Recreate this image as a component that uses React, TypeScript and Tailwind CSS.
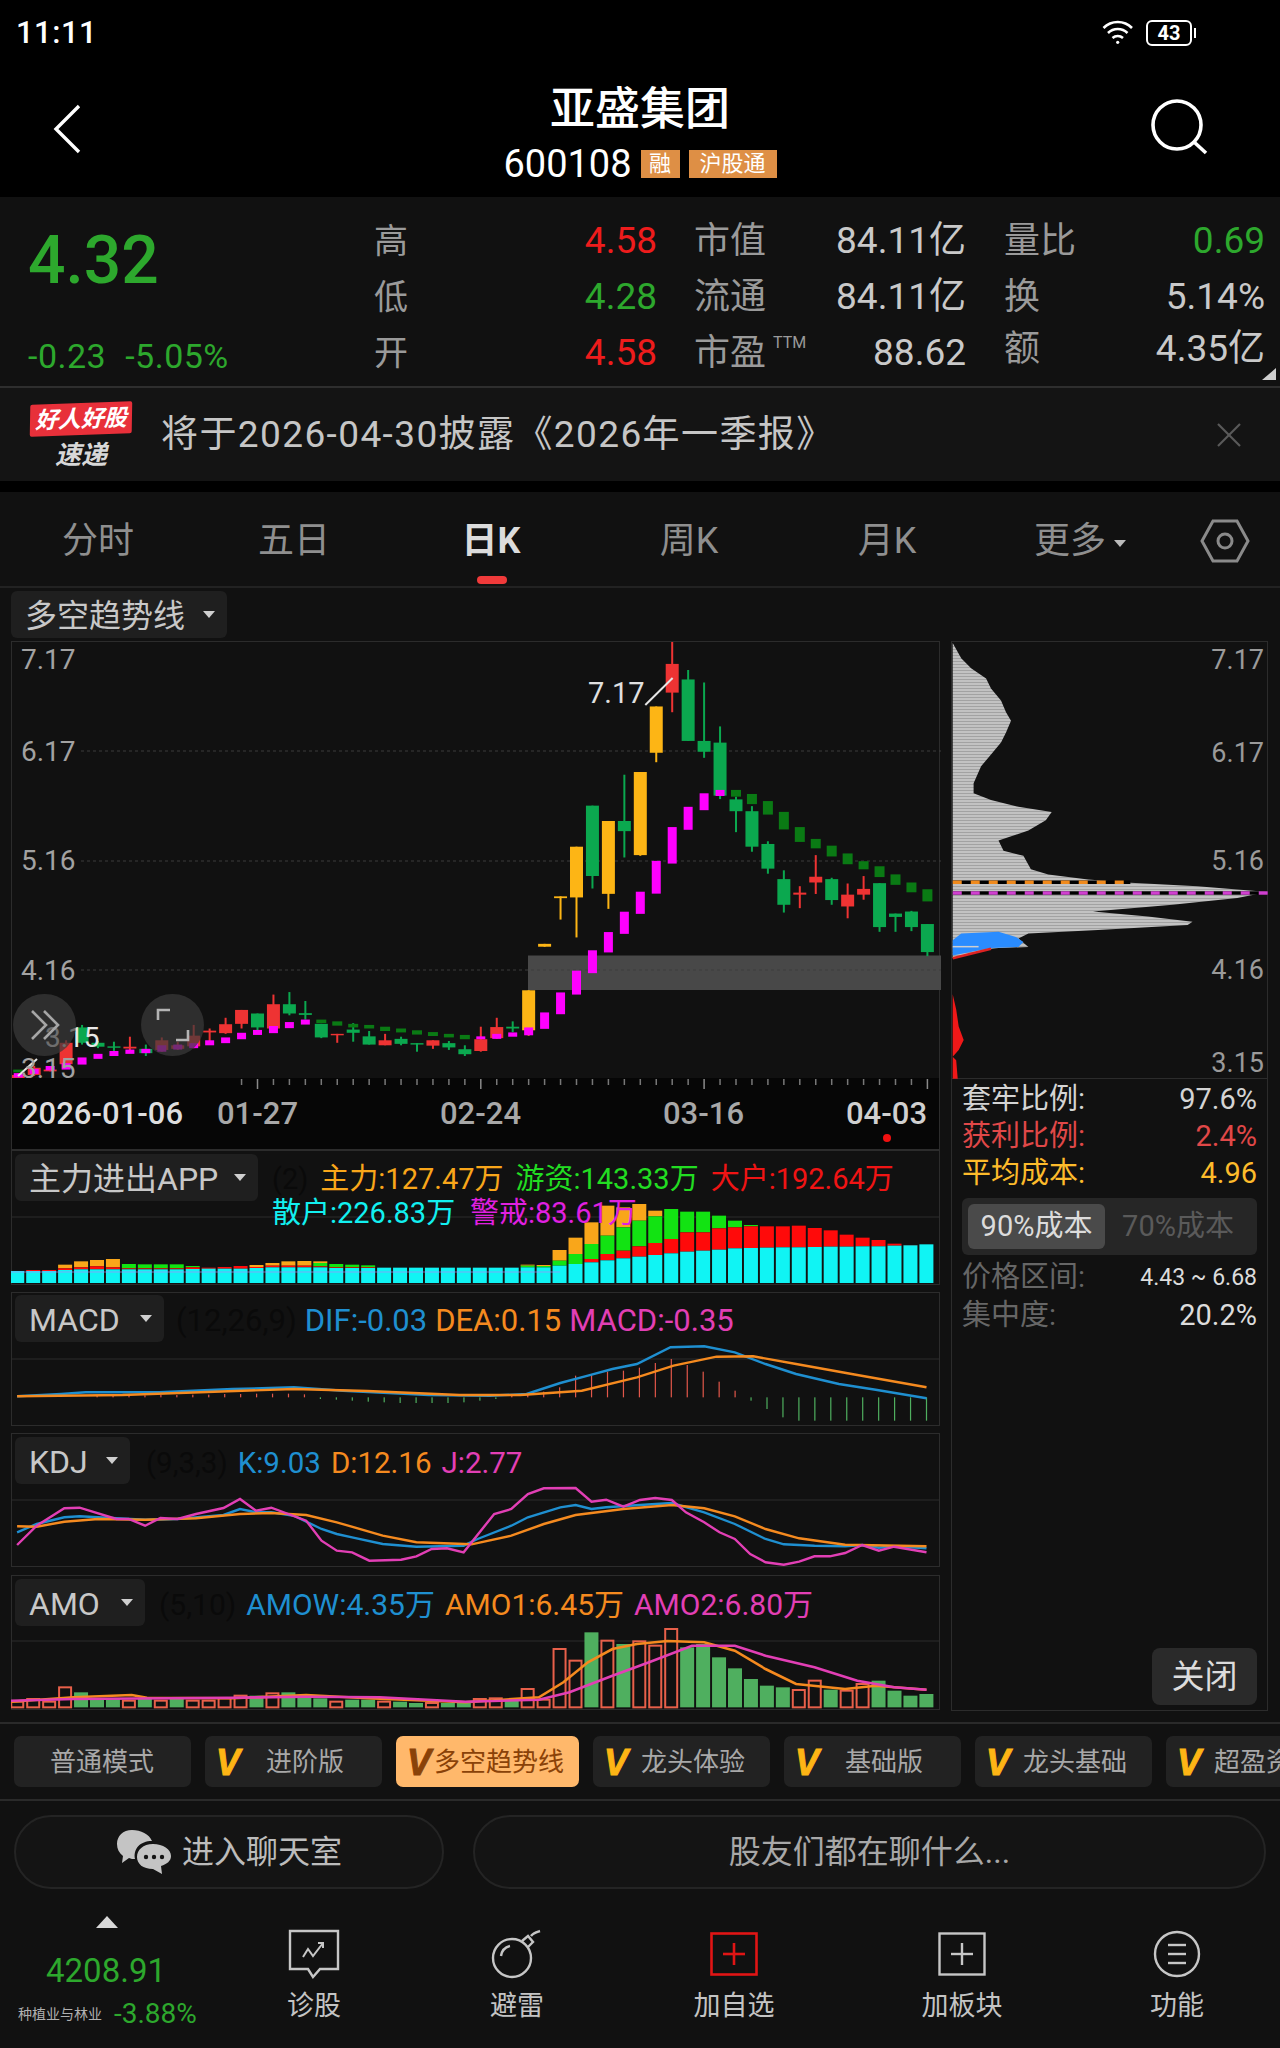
import React from "react";

const X = (i: number) => 17.25 + 15.95 * i;
const z2 = (Y: number) => 590 + Y / 2.8;
const z3 = (Y: number) => 620 + Y / 2.96;
const zx3 = (V: number) => 500 + V / 2.01;
const pts = (a: number[][], fx: (v: number) => number, fy: (v: number) => number) =>
  a.map(([p, q]) => `${fx(p).toFixed(1)},${fy(q).toFixed(1)}`).join(" ");

const G = "#0BA84F";
const R = "#EE3333";
const O = "#FDB515";
const DG = "#0A7A14";
const MG = "#FF00FF";

// i, colour, high, bodyTop, bodyBottom, low (zoom units)
const candlesA: [number, string, number, number, number, number][] = [
  [0, R, 1350, 1355, 1365, 1366], [1, R, 1330, 1335, 1355, 1358], [2, R, 1335, 1340, 1345, 1345], [3, R, 1258, 1265, 1325, 1330],
  [4, G, 1215, 1222, 1265, 1270], [5, G, 1260, 1265, 1276, 1280], [6, G, 1262, 1275, 1279, 1290], [7, R, 1248, 1276, 1281, 1290],
  [8, G, 1270, 1282, 1294, 1302], [9, R, 1250, 1258, 1285, 1290], [10, R, 1262, 1272, 1282, 1285], [11, R, 1215, 1245, 1275, 1280],
  [12, R, 1225, 1231, 1236, 1270], [13, R, 1195, 1213, 1238, 1240], [14, R, 1173, 1173, 1212, 1225], [15, G, 1183, 1183, 1222, 1240],
  [16, R, 1130, 1157, 1225, 1230], [17, G, 1123, 1157, 1183, 1188], [18, G, 1148, 1182, 1187, 1200], [19, G, 1212, 1212, 1250, 1252],
  [20, R, 1240, 1240, 1244, 1265], [21, G, 1210, 1228, 1237, 1262], [22, G, 1232, 1247, 1270, 1270], [23, R, 1240, 1258, 1272, 1272],
  [24, G, 1248, 1254, 1268, 1272], [25, G, 1266, 1266, 1270, 1290], [26, R, 1258, 1258, 1273, 1282], [27, G, 1260, 1266, 1278, 1285],
  [28, G, 1272, 1283, 1297, 1302], [29, R, 1220, 1255, 1288, 1290], [30, R, 1195, 1221, 1252, 1254], [31, G, 1205, 1220, 1225, 1235],
  [32, O, 1118, 1118, 1230, 1245], [33, O, 988, 988, 996, 996], [34, O, 855, 855, 860, 920], [35, O, 716, 716, 858, 970],
  [36, G, 601, 601, 798, 833], [37, O, 644, 644, 848, 890],
];
const candlesB: [number, string, number, number, number, number][] = [
  [38, G, 455, 592, 622, 700], [39, O, 447, 447, 693, 695], [40, O, 253, 253, 390, 418], [41, R, 60, 127, 212, 270],
  [42, G, 145, 173, 355, 355], [43, G, 182, 355, 387, 405], [44, G, 312, 360, 517, 527], [45, G, 520, 528, 563, 625],
  [46, G, 548, 563, 668, 683], [47, G, 652, 660, 733, 748], [48, G, 738, 764, 840, 863], [49, R, 785, 804, 810, 850],
  [50, R, 693, 757, 774, 808], [51, G, 760, 764, 826, 840], [52, R, 777, 810, 845, 880], [53, R, 755, 793, 810, 825],
  [54, G, 776, 776, 906, 920], [55, G, 866, 866, 876, 920], [56, G, 858, 860, 906, 918], [57, G, 897, 897, 980, 992],
];
const darkA = [[0, 1340, 1348], [19, 1200, 1210], [20, 1205, 1217], [21, 1212, 1222], [22, 1215, 1225], [23, 1220, 1232], [24, 1225, 1236], [25, 1230, 1242], [26, 1235, 1246], [27, 1240, 1250], [28, 1243, 1255]];
const darkB = [[45, 500, 520], [46, 512, 542], [47, 533, 573], [48, 565, 617], [49, 610, 654], [50, 645, 673], [51, 665, 697], [52, 688, 720], [53, 711, 735], [54, 726, 758], [55, 750, 781], [56, 774, 803], [57, 794, 830]];
const magA = [[0, 1350, 1362], [1, 1338, 1352], [2, 1330, 1342], [3, 1322, 1340], [4, 1306, 1326], [5, 1296, 1310], [6, 1288, 1302], [7, 1284, 1296], [8, 1282, 1294], [9, 1272, 1290], [10, 1270, 1284], [11, 1266, 1280], [12, 1258, 1272], [13, 1250, 1266], [14, 1237, 1255], [15, 1229, 1243], [16, 1218, 1238], [17, 1207, 1224], [18, 1200, 1214], [29, 1247, 1255], [30, 1240, 1254], [31, 1236, 1248], [32, 1222, 1244], [33, 1180, 1226], [34, 1124, 1185], [35, 1063, 1130], [36, 1006, 1070], [37, 955, 1012], [38, 898, 960], [39, 842, 904]];
const magB = [[40, 710, 807], [41, 610, 718], [42, 550, 618], [43, 510, 560], [44, 500, 518]];

const stack: number[][] = [
  [396, 396, 396, 396], [393, 393, 393, 396], [393, 393, 393, 396], [377, 388, 388, 393], [367, 385, 385, 391], [363, 382, 382, 391],
  [360, 385, 385, 391], [375, 375, 388, 391], [376, 376, 388, 391], [376, 376, 388, 391], [376, 376, 388, 391], [381, 381, 385, 390],
  [386, 386, 386, 389], [384, 384, 384, 389], [381, 381, 381, 389], [378, 384, 384, 387], [372, 380, 380, 385], [367, 380, 380, 385],
  [366, 380, 380, 385], [367, 372, 382, 385], [375, 375, 385, 387], [377, 377, 385, 387], [379, 379, 385, 387], [386, 386, 386, 386],
  [386, 386, 386, 386], [386, 386, 386, 386], [386, 386, 386, 386], [386, 386, 386, 386], [386, 386, 386, 386], [386, 386, 386, 386],
  [386, 386, 386, 386], [386, 386, 386, 386], [377, 380, 385, 385], [378, 381, 385, 385], [333, 365, 380, 380], [296, 345, 375, 375],
  [250, 315, 360, 370], [200, 290, 345, 364], [205, 265, 335, 358], [195, 245, 322, 353], [215, 232, 312, 348], [210, 210, 300, 343],
  [218, 218, 280, 338], [218, 218, 280, 335], [230, 230, 268, 332], [245, 245, 265, 328], [258, 258, 262, 327], [262, 262, 262, 326],
  [262, 262, 262, 325], [260, 260, 260, 325], [267, 267, 267, 324], [274, 274, 274, 323], [287, 287, 287, 323], [296, 296, 296, 322],
  [303, 303, 303, 322], [314, 314, 314, 320], [318, 318, 318, 319], [316, 316, 316, 316],
];

const macdSticks: [number, number][] = [
  [5, 770], [6, 770], [7, 769], [8, 769], [9, 768], [10, 768], [11, 767], [12, 767], [13, 765], [14, 765], [15, 764], [16, 764], [17, 764], [18, 766],
  [19, 780], [20, 782], [21, 785], [22, 788], [23, 790], [24, 792], [25, 792], [26, 792], [27, 792], [28, 790], [29, 785], [30, 780],
  [31, 770], [32, 768], [33, 758], [34, 745], [35, 710], [36, 708], [37, 698], [38, 695], [39, 686], [40, 672], [41, 660], [42, 678], [43, 698], [44, 728], [45, 755],
  [46, 785], [47, 810], [48, 835], [49, 845], [50, 845], [51, 845], [52, 845], [53, 845], [54, 845], [55, 845], [56, 845], [57, 845],
];

const amo: [number, number][] = [
  [818, 0], [810, 0], [818, 0], [775, 0], [790, 1], [808, 1], [808, 1], [815, 0], [808, 1], [815, 0], [805, 1], [815, 0], [815, 0], [808, 0], [800, 0],
  [800, 1], [793, 0], [790, 1], [800, 1], [808, 1], [818, 0], [812, 1], [812, 1], [818, 0], [818, 1], [822, 1], [822, 0], [822, 1], [822, 1], [810, 0],
  [808, 0], [815, 1], [780, 0], [812, 0], [660, 0], [695, 0], [610, 1], [635, 0], [645, 1], [637, 0], [650, 0], [600, 0], [655, 1], [645, 1], [685, 1],
  [718, 1], [750, 1], [770, 1], [775, 1], [783, 0], [755, 0], [782, 1], [785, 0], [765, 0], [755, 1], [785, 1], [800, 1], [795, 1],
];

const zx = (v: number) => v / 1.633;
const y4 = (v: number) => 1140 + v / 3;
const y5 = (v: number) => 1430 + v / 3;

const chipOutline = [[908, 65], [925, 110], [945, 140], [975, 170], [985, 200], [1005, 235], [1015, 270], [1025, 295], [1015, 330], [1005, 360], [985, 395], [965, 430], [950, 480], [950, 510], [985, 530], [1040, 550], [1107, 565], [1095, 590], [1060, 620], [1000, 650], [1010, 680], [1050, 695], [1065, 735], [1100, 750], [1180, 765], [1265, 775], [1400, 785], [1542, 802], [1480, 820], [1350, 840], [1190, 860], [1300, 875], [1390, 890], [1380, 900], [1200, 915], [1060, 925], [1040, 940], [1060, 965], [1000, 968], [985, 970], [908, 998]];
const chipBlue = [[908, 945], [925, 925], [1000, 920], [1035, 935], [1050, 950], [1040, 965], [985, 968], [908, 990]];
const chipRed = [[908, 1105], [915, 1150], [920, 1200], [930, 1240], [920, 1270], [908, 1290], [915, 1300], [918, 1355], [908, 1355]];

function Caret({ className }: { className: string }) {
  return <span className={`inline-block h-0 w-0 border-x-[6px] border-t-[7px] border-x-transparent ${className}`} />;
}

function Select({ label, className }: { label: string; className: string }) {
  return (
    <div className={`flex h-[47px] shrink-0 items-center justify-between rounded-[6px] bg-[#1f1f1f] pl-[14px] pr-[12px] text-[32px] text-[#c8c8c8] ${className}`}>
      <span className="pt-[3px]">{label}</span>
      <Caret className="border-t-[#cfcfcf]" />
    </div>
  );
}

function MainChart() {
  const cs = [
    ...candlesA.map((c) => ({ i: c[0], col: c[1], h: z2(c[2]), t: z2(c[3]), b: z2(c[4]), l: z2(c[5]) })),
    ...candlesB.map((c) => ({ i: c[0], col: c[1], h: z3(c[2]), t: z3(c[3]), b: z3(c[4]), l: z3(c[5]) })),
  ];
  return (
    <svg viewBox="11 641 929 438" className="absolute left-0 top-0 h-[438px] w-[929px]">
      <rect x={527} y={954.5} width={413} height={34.5} fill="#484848" />
      {[750, 860, 969].map((y) => (
        <line key={y} x1={80} x2={940} y1={y} y2={y} stroke="#3d3d3d" strokeWidth={1} strokeDasharray="3 3" />
      ))}
      {cs.map((c) => (
        <g key={c.i} fill={c.col}>
          <rect x={X(c.i) - 1} y={c.h} width={2} height={c.l - c.h} />
          <rect x={X(c.i) - 6.5} y={c.t} width={13} height={c.b - c.t} />
        </g>
      ))}
      {darkA.map((d) => <rect key={d[0]} x={X(d[0]) - 5} y={z2(d[1])} width={10} height={(d[2] - d[1]) / 2.8} fill={DG} />)}
      {darkB.map((d) => <rect key={d[0]} x={X(d[0]) - 5} y={z3(d[1])} width={10} height={(d[2] - d[1]) / 2.96} fill={DG} />)}
      {magA.map((d) => <rect key={d[0]} x={X(d[0]) - 4.5} y={z2(d[1])} width={9} height={(d[2] - d[1]) / 2.8} fill={MG} />)}
      {magB.map((d) => <rect key={d[0]} x={X(d[0]) - 4.5} y={z3(d[1])} width={9} height={(d[2] - d[1]) / 2.96} fill={MG} />)}
      <line x1={671.6} y1={677} x2={644.3} y2={704} stroke="#e6e6e6" strokeWidth={2} />
      <line x1={17} y1={1075} x2={36} y2={1058} stroke="#e6e6e6" strokeWidth={2} />
    </svg>
  );
}

function Ticks() {
  return (
    <svg viewBox="11 1079 929 12" className="absolute left-0 top-0 h-[12px] w-[929px]">
      {Array.from({ length: 44 }, (_, k) => k + 14).map((i) => {
        const major = i === 15 || i === 29 || i === 43 || i === 57;
        return <rect key={i} x={X(i) - 0.75} y={1080} width={1.5} height={major ? 10 : 6} fill={major ? "#8a8a8a" : "#777"} />;
      })}
    </svg>
  );
}

function ChipChart() {
  return (
    <svg viewBox="951 641 316 438" className="absolute left-0 top-0 h-[438px] w-[316px]">
      <defs>
        <pattern id="chipstripe" width="8" height="3" patternUnits="userSpaceOnUse">
          <rect width="8" height="3" fill="#c2c2c2" />
          <rect width="8" height="1" fill="#a2a2a2" />
        </pattern>
      </defs>
      <polygon points={pts(chipOutline, zx3, z3)} fill="url(#chipstripe)" />
      <polygon points={pts(chipBlue, zx3, z3)} fill="#2A8CFF" />
      <line x1={zx3(908)} x2={zx3(960)} y1={z3(964)} y2={z3(964)} stroke="#cfcfcf" strokeWidth={1.5} />
      <line x1={zx3(908)} x2={zx3(985)} y1={z3(998)} y2={z3(970)} stroke="#d22" strokeWidth={2.5} />
      <polygon points={pts(chipRed, zx3, z3)} fill="#F01818" />
      <line x1={zx3(908)} x2={zx3(1265)} y1={z3(773)} y2={z3(773)} stroke="#000" strokeWidth={3.5} />
      <line x1={zx3(908)} x2={zx3(1265)} y1={z3(773)} y2={z3(773)} stroke="#F08A1C" strokeWidth={3.5} strokeDasharray="9 9" />
      <line x1={zx3(908)} x2={zx3(1542)} y1={z3(805)} y2={z3(805)} stroke="#000" strokeWidth={3.5} />
      <line x1={zx3(908)} x2={zx3(1542)} y1={z3(805)} y2={z3(805)} stroke="#D040D0" strokeWidth={3.5} strokeDasharray="9 9" />
    </svg>
  );
}

function FlowPanel() {
  return (
    <svg viewBox="11 1151 929 135" className="absolute -left-px -top-px h-[135px] w-[929px]">
      <line x1={11} x2={940} y1={1218} y2={1218} stroke="#2c2c2c" />
      {stack.map((s, i) => {
        const x = X(i) - 7;
        const [o, g, r, c] = s.map(y4);
        const b = y4(432);
        return (
          <g key={i}>
            <rect x={x} y={o} width={14} height={g - o} fill="#F9A61A" />
            <rect x={x} y={g} width={14} height={r - g} fill="#12E312" />
            <rect x={x} y={r} width={14} height={c - r} fill="#FF0A0A" />
            <rect x={x} y={c} width={14} height={b - c} fill="#10F4F4" />
          </g>
        );
      })}
      <line x1={11} x2={560} y1={1273} y2={1273} stroke="#A78BFA" strokeWidth={1} opacity={0.7} />
    </svg>
  );
}

function MacdPanel() {
  const blue = [[28, 772], [100, 765], [140, 760], [260, 760], [380, 750], [480, 745], [560, 755], [700, 768], [800, 770], [860, 765], [915, 732], [960, 710], [1000, 690], [1040, 675], [1095, 625], [1150, 622], [1200, 640], [1250, 675], [1300, 705], [1370, 735], [1430, 752], [1513, 778]];
  const orange = [[28, 772], [200, 768], [350, 758], [480, 750], [600, 756], [750, 768], [850, 768], [950, 755], [1040, 715], [1100, 680], [1170, 653], [1230, 652], [1300, 675], [1400, 708], [1513, 745]];
  return (
    <svg viewBox="11 1293 929 134" className="absolute -left-px -top-px h-[134px] w-[929px]">
      <line x1={11} x2={940} y1={1360} y2={1360} stroke="#2c2c2c" />
      {macdSticks.map(([i, t]) => {
        const up = t < 775;
        return <rect key={i} x={X(i) - 0.5} y={y4(up ? t : 775)} width={1.2} height={Math.abs(t - 775) / 3} fill={up ? "#E2574A" : "#4FAF5F"} />;
      })}
      <polyline points={pts(blue, zx, y4)} fill="none" stroke="#1F8FD0" strokeWidth={2.4} />
      <polyline points={pts(orange, zx, y4)} fill="none" stroke="#F58A1F" strokeWidth={2.4} />
    </svg>
  );
}

function KdjPanel() {
  const j = [[28, 348], [60, 290], [105, 238], [130, 236], [190, 270], [210, 270], [237, 290], [262, 267], [290, 270], [320, 255], [365, 237], [392, 210], [418, 245], [443, 236], [500, 275], [525, 335], [550, 365], [575, 370], [603, 395], [655, 392], [680, 382], [705, 360], [730, 358], [757, 370], [807, 255], [835, 240], [862, 195], [888, 178], [940, 177], [966, 218], [990, 212], [1018, 233], [1045, 213], [1070, 207], [1097, 213], [1120, 250], [1150, 280], [1175, 310], [1200, 330], [1225, 375], [1250, 400], [1280, 407], [1305, 398], [1330, 382], [1355, 382], [1380, 372], [1408, 348], [1435, 365], [1460, 353], [1513, 370]];
  const k = [[28, 310], [60, 285], [105, 265], [130, 262], [190, 268], [237, 272], [290, 270], [365, 258], [392, 240], [418, 250], [443, 250], [480, 260], [525, 300], [550, 315], [575, 325], [625, 345], [680, 353], [757, 350], [780, 330], [835, 290], [862, 265], [915, 235], [940, 228], [966, 240], [990, 235], [1045, 228], [1097, 222], [1150, 250], [1200, 285], [1250, 330], [1280, 346], [1330, 350], [1380, 352], [1408, 348], [1435, 356], [1460, 352], [1513, 358]];
  const d = [[28, 292], [60, 293], [105, 278], [160, 270], [237, 272], [320, 268], [392, 255], [443, 252], [500, 258], [550, 280], [625, 320], [680, 340], [770, 346], [835, 320], [888, 285], [940, 258], [1018, 240], [1097, 228], [1150, 238], [1200, 262], [1250, 300], [1305, 328], [1380, 347], [1513, 352]];
  return (
    <svg viewBox="11 1434 929 134" className="absolute -left-px -top-px h-[134px] w-[929px]">
      <line x1={11} x2={940} y1={1501} y2={1501} stroke="#2c2c2c" />
      <polyline points={pts(k, zx, y5)} fill="none" stroke="#1F8FD0" strokeWidth={2.4} />
      <polyline points={pts(d, zx, y5)} fill="none" stroke="#F58A1F" strokeWidth={2.4} />
      <polyline points={pts(j, zx, y5)} fill="none" stroke="#E23FB5" strokeWidth={2.4} />
    </svg>
  );
}

function AmoPanel() {
  const o = [[18, 818], [120, 805], [215, 798], [240, 806], [380, 808], [500, 798], [600, 808], [760, 820], [880, 805], [920, 760], [960, 700], [1000, 660], [1040, 645], [1090, 636], [1150, 640], [1200, 665], [1250, 720], [1300, 765], [1380, 780], [1430, 770], [1513, 782]];
  const p = [[18, 815], [120, 810], [380, 806], [500, 803], [620, 805], [760, 818], [880, 812], [930, 790], [1000, 740], [1060, 700], [1130, 650], [1200, 650], [1250, 680], [1330, 715], [1400, 755], [1460, 775], [1513, 782]];
  return (
    <svg viewBox="11 1576 929 135" className="absolute -left-px -top-px h-[135px] w-[929px]">
      <line x1={11} x2={940} y1={1642} y2={1642} stroke="#2c2c2c" />
      {amo.map(([t, g], i) =>
        g ? (
          <rect key={i} x={X(i) - 7} y={y5(t)} width={14} height={(835 - t) / 3} fill="#4FAF5F" />
        ) : (
          <rect key={i} x={X(i) - 6} y={y5(t)} width={12} height={(835 - t) / 3} fill="none" stroke="#E8604A" strokeWidth={2} />
        )
      )}
      <polyline points={pts(o, zx, y5)} fill="none" stroke="#F58A1F" strokeWidth={2.6} />
      <polyline points={pts(p, zx, y5)} fill="none" stroke="#E23FB5" strokeWidth={2.6} />
    </svg>
  );
}

function Row({ label, value, color = "text-[#c9c9c9]", labelClass = "text-[36px]", valueClass = "" }: { label: React.ReactNode; value: string; color?: string; labelClass?: string; valueClass?: string }) {
  return (
    <div className="flex h-[56px] items-center justify-between">
      <span className={`text-[#9a9a9a] ${labelClass}`}>{label}</span>
      <span className={`text-[37px] ${color} ${valueClass}`}>{value}</span>
    </div>
  );
}

function Chip({ text, active, v = true, className = "" }: { text: string; active?: boolean; v?: boolean; className?: string }) {
  return (
    <div
      className={`flex h-[51px] shrink-0 items-center rounded-[7px] pl-[11px] pt-[3px] text-[26px] ${className} ${active ? "bg-[#FFB86B] text-[#8A4208]" : "bg-[#222222] text-[#a8a8a8]"}`}
    >
      {v && <span className={`font-['Liberation_Sans',sans-serif] text-[36px] font-bold italic leading-none [-webkit-text-stroke:1px_currentColor] ${active ? "text-[#8A4208]" : "text-[#FDB515]"}`}>V</span>}
      <span className="flex-1 pr-[12px] text-center">{text}</span>
    </div>
  );
}

function NavItem({ label, icon, className }: { label: string; icon: React.ReactNode; className: string }) {
  return (
    <div className={`flex flex-col items-center pt-[41px] ${className}`}>
      <div className="flex h-[48px] items-center justify-center">{icon}</div>
      <span className="mt-[11px] text-[27px] leading-[34px] text-[#c4c4c4]">{label}</span>
    </div>
  );
}

export default function App() {
  return (
    <div className="flex h-[2048px] w-[1280px] flex-col overflow-hidden bg-[#111111] font-['Roboto','Noto_Sans_CJK_SC',sans-serif]">
      {/* status bar */}
      <div className="flex h-[65px] shrink-0 items-center bg-black pl-[16px] pr-[88px] text-white">
        <span className="pt-[2px] text-[31px] font-medium tracking-[0.5px]">11:11</span>
        <div className="ml-auto flex items-center gap-[12px]">
          <svg width="32" height="25" viewBox="0 0 32 25" fill="none" stroke="#fff" strokeWidth="2.6">
            <path d="M1.5 8 A 20 20 0 0 1 30 8" />
            <path d="M6 13 A 14 14 0 0 1 25.5 13" />
            <path d="M10.5 18 A 8 8 0 0 1 21 18" />
            <circle cx="15.7" cy="22.3" r="1.6" fill="#fff" stroke="none" />
          </svg>
          <div className="relative flex h-[26px] w-[46px] items-center justify-center rounded-[6px] border-2 border-white text-[20px] font-bold leading-none">
            43
            <span className="absolute -right-[6px] top-[6px] h-[10px] w-[2px] bg-white" />
          </div>
        </div>
      </div>

      {/* header */}
      <div className="relative flex h-[132px] shrink-0 flex-col items-center bg-black text-white">
        <svg width="28" height="50" viewBox="0 0 28 50" fill="none" stroke="#fff" strokeWidth="3.4" className="absolute left-[53px] top-[39px]">
          <polyline points="26,2 3,25 26,48" />
        </svg>
        <svg width="58" height="58" viewBox="0 0 58 58" fill="none" stroke="#fff" strokeWidth="3.6" className="absolute left-[1151px] top-[34px]">
          <circle cx="26" cy="26" r="24" />
          <line x1="43" y1="43" x2="55" y2="54" />
        </svg>
        <div className="mt-[21px] text-[45px] font-medium leading-[48px]">亚盛集团</div>
        <div className="mt-[14px] flex items-center gap-[9px]">
          <span className="text-[38px] leading-[32px]">600108</span>
          <span className="flex h-[28px] w-[39px] items-center justify-center bg-[#DE8F45] text-[22px] leading-none">融</span>
          <span className="flex h-[28px] w-[88px] items-center justify-center bg-[#DE8F45] text-[22px] leading-none">沪股通</span>
        </div>
      </div>

      {/* quote */}
      <div className="relative flex h-[191px] shrink-0 items-start border-b-2 border-[#2e2e2e] pt-[16px]">
        <div className="flex w-[374px] flex-col pl-[28px] text-[#2DA82D]">
          <div className="mt-[8px] text-[66px] font-medium leading-[80px]">4.32</div>
          <div className="mt-[37px] flex gap-[19px] text-[34px] leading-[36px] tracking-[0.5px]">
            <span>-0.23</span>
            <span>-5.05%</span>
          </div>
        </div>
        <div className="w-[283px]">
          <Row label="高" value="4.58" color="text-[#EE1C1C]" labelClass="text-[34px]" />
          <Row label="低" value="4.28" color="text-[#2DA82D]" labelClass="text-[34px]" />
          <Row label="开" value="4.58" color="text-[#EE1C1C]" labelClass="text-[34px]" />
        </div>
        <div className="ml-[37px] w-[272px]">
          <Row label="市值" value="84.11亿" />
          <Row label="流通" value="84.11亿" />
          <Row
            label={
              <>
                市盈
                <span className="relative -top-[17px] ml-[7px] text-[16px]">TTM</span>
              </>
            }
            value="88.62"
          />
        </div>
        <div className="ml-[38px] w-[261px]">
          <Row label="量比" value="0.69" color="text-[#2DA82D]" />
          <Row label="换" value="5.14%" />
          <Row label="额" value="4.35亿" labelClass="text-[36px] -translate-y-[4px] inline-block" valueClass="-translate-y-[4px] inline-block" />
        </div>
        <svg width="14" height="12" viewBox="0 0 14 12" className="absolute left-[1262px] top-[171px]">
          <polygon points="14,0 14,12 0,12" fill="#cfcfcf" />
        </svg>
      </div>

      {/* banner */}
      <div className="flex h-[93px] shrink-0 items-center bg-[#141414] pl-[30px] pr-[38px]">
        <div className="relative mt-[6px] flex h-[70px] w-[102px] shrink-0 flex-col items-center">
          <div className="flex h-[32px] w-[102px] -rotate-2 -skew-x-3 items-center justify-center rounded-[2px] bg-[#E8303A] text-[23px] font-bold italic leading-none text-white">好人好股</div>
          <div className="mt-[6px] text-[26px] font-bold italic leading-[28px] text-[#d8d8d8]">速递</div>
        </div>
        <div className="ml-[29px] text-[37px] tracking-[1.4px] text-[#c6c6c6]">将于2026-04-30披露《2026年一季报》</div>
        <svg width="26" height="26" viewBox="0 0 26 26" stroke="#5a5a5a" strokeWidth="2.2" className="ml-auto">
          <line x1="2" y1="2" x2="24" y2="24" />
          <line x1="24" y1="2" x2="2" y2="24" />
        </svg>
      </div>

      <div className="h-[11px] shrink-0 bg-black" />

      {/* tabs */}
      <div className="flex h-[96px] shrink-0 items-center border-b-2 border-[#222] pt-[4px] text-[36px] text-[#8f8f8f]">
        <span className="w-[196px] text-center">分时</span>
        <span className="w-[196px] text-center">五日</span>
        <span className="relative w-[198px] text-center font-bold text-[#dcdcdc]">
          日K
          <span className="absolute left-[85px] top-[62px] h-[8px] w-[30px] rounded-full bg-[#F03A3A]" />
        </span>
        <span className="w-[198px] text-center">周K</span>
        <span className="w-[198px] text-center">月K</span>
        <span className="flex w-[188px] items-center justify-center gap-[8px]">
          更多
          <Caret className="mt-[4px] border-x-[5px] border-t-[#bbb]" />
        </span>
        <svg width="50" height="46" viewBox="0 0 50 46" fill="none" stroke="#8a8a8a" strokeWidth="3" className="ml-[26px]">
          <polygon points="13,3 37,3 48,23 37,43 13,43 2,23" />
          <circle cx="25" cy="23" r="7" />
        </svg>
      </div>

      {/* chart area */}
      <div className="flex shrink-0 pl-[11px]">
        <div className="flex w-[929px] flex-col">
          <Select label="多空趋势线" className="mt-[3px] w-[216px]" />
          <div className="relative mt-[3px] box-border h-[509px] border border-[#2c2c2c]">
            <MainChart />
            <span className="absolute left-[9px] top-[1px] text-[28px] leading-[34px] text-[#a2a2a2]">7.17</span>
            <span className="absolute left-[9px] top-[93px] text-[28px] leading-[34px] text-[#a2a2a2]">6.17</span>
            <span className="absolute left-[9px] top-[202px] text-[28px] leading-[34px] text-[#a2a2a2]">5.16</span>
            <span className="absolute left-[9px] top-[312px] text-[28px] leading-[34px] text-[#a2a2a2]">4.16</span>
            <span className="absolute left-[9px] top-[410px] text-[28px] leading-[34px] text-[#a2a2a2]">3.15</span>
            <span className="absolute left-[576px] top-[34px] text-[29px] leading-[34px] text-[#e0e0e0]">7.17</span>
            <span className="absolute left-[33px] top-[379px] text-[28px] leading-[34px] text-[#e8e8e8]">3.15</span>
            <button className="absolute left-[1px] top-[352px] flex h-[62px] w-[63px] items-center justify-center rounded-full bg-[#3a3a3a]/70">
              <svg width="34" height="32" viewBox="0 0 34 32" fill="none" stroke="#a6a6a6" strokeWidth="2.6">
                <polyline points="4,2 18,16 4,30" />
                <polyline points="16,2 30,16 16,30" />
              </svg>
            </button>
            <button className="absolute left-[129px] top-[352px] flex h-[62px] w-[63px] items-center justify-center rounded-full bg-[#3a3a3a]/70">
              <svg width="34" height="34" viewBox="0 0 34 34" fill="none" stroke="#b4b4b4" strokeWidth="2.6">
                <polyline points="2,12 2,2 14,2" />
                <polyline points="32,22 32,32 20,32" />
              </svg>
            </button>
            <div className="absolute bottom-0 left-0 right-0 h-[71px] bg-[#060606]">
              <Ticks />
              <div className="flex pl-[9px] pt-[17px] text-[31px] font-medium leading-[38px] text-[#a8a8a8]">
                <span className="w-[196px] text-[#dedede]">2026-01-06</span>
                <span className="w-[223px]">01-27</span>
                <span className="w-[223px]">02-24</span>
                <span className="w-[183px]">03-16</span>
                <span className="text-[#d0d0d0]">04-03</span>
              </div>
              <span className="absolute left-[871px] top-[56px] h-[8px] w-[8px] rounded-full bg-[#F01010]" />
            </div>
          </div>

          <div className="relative h-[135px] border border-[#2c2c2c] pl-[3px] pt-[3px]">
            <FlowPanel />
            <div className="relative flex items-start">
              <Select label="主力进出APP" className="w-[243px]" />
              <div className="ml-[14px] mt-[8px] flex w-[650px] flex-wrap gap-x-[12px] text-[29px] leading-[34px]">
                <span className="text-[#0a0a0a]">(2)</span>
                <span className="text-[#F9A61A]">主力:127.47万</span>
                <span className="text-[#22DD22]">游资:143.33万</span>
                <span className="text-[#F01414]">大户:192.64万</span>
                <span className="w-[186px] text-[#12F0F0]">散户:226.83万</span>
                <span className="text-[#E020E0]">警戒:83.61万</span>
              </div>
            </div>
          </div>

          <div className="relative mt-[7px] h-[134px] border border-[#2c2c2c] pl-[3px] pt-[2px]">
            <MacdPanel />
            <div className="relative flex items-start">
              <Select label="MACD" className="w-[149px]" />
              <div className="ml-[12px] mt-[9px] flex gap-x-[8px] text-[31px] leading-[34px]">
                <span className="text-[#0a0a0a]">(12,26,9)</span>
                <span className="text-[#1F8FD0]">DIF:-0.03</span>
                <span className="text-[#F58A1F]">DEA:0.15</span>
                <span className="text-[#E23FB5]">MACD:-0.35</span>
              </div>
            </div>
          </div>

          <div className="relative mt-[7px] h-[134px] border border-[#2c2c2c] pl-[3px] pt-[3px]">
            <KdjPanel />
            <div className="relative flex items-start">
              <Select label="KDJ" className="w-[115px]" />
              <div className="ml-[16px] mt-[9px] flex gap-x-[10px] text-[29.5px] leading-[34px]">
                <span className="text-[#0a0a0a]">(9,3,3)</span>
                <span className="text-[#1F8FD0]">K:9.03</span>
                <span className="text-[#F58A1F]">D:12.16</span>
                <span className="text-[#E23FB5]">J:2.77</span>
              </div>
            </div>
          </div>

          <div className="relative mt-[8px] h-[135px] border border-[#2c2c2c] pl-[3px] pt-[3px]">
            <AmoPanel />
            <div className="relative flex items-start">
              <Select label="AMO" className="w-[130px]" />
              <div className="ml-[14px] mt-[9px] flex gap-x-[10px] text-[30px] leading-[34px]">
                <span className="text-[#0a0a0a]">(5,10)</span>
                <span className="text-[#1F8FD0]">AMOW:4.35万</span>
                <span className="text-[#F58A1F]">AMO1:6.45万</span>
                <span className="text-[#E23FB5]">AMO2:6.80万</span>
              </div>
            </div>
          </div>
        </div>

        {/* right column */}
        <div className="ml-[11px] mt-[53px] flex h-[1070px] w-[317px] flex-col border border-[#2c2c2c]">
          <div className="relative h-[437px] shrink-0 border-b border-[#2c2c2c]">
            <ChipChart />
            <span className="absolute right-[3px] top-[1px] text-[27px] leading-[34px] text-[#9a9a9a]">7.17</span>
            <span className="absolute right-[3px] top-[94px] text-[27px] leading-[34px] text-[#9a9a9a]">6.17</span>
            <span className="absolute right-[3px] top-[202px] text-[27px] leading-[34px] text-[#9a9a9a]">5.16</span>
            <span className="absolute right-[3px] top-[311px] text-[27px] leading-[34px] text-[#9a9a9a]">4.16</span>
            <span className="absolute right-[3px] top-[404px] text-[27px] leading-[34px] text-[#9a9a9a]">3.15</span>
          </div>
          <div className="flex flex-1 flex-col px-[10px] pb-[5px] pt-[2px]">
            <div className="flex h-[37px] items-center justify-between text-[29px] text-[#d4d4d4]">
              <span>套牢比例:</span>
              <span>97.6%</span>
            </div>
            <div className="flex h-[37px] items-center justify-between text-[29px] text-[#E04848]">
              <span>获利比例:</span>
              <span>2.4%</span>
            </div>
            <div className="flex h-[37px] items-center justify-between text-[29px] text-[#FDBB2B]">
              <span>平均成本:</span>
              <span>4.96</span>
            </div>
            <div className="mt-[6px] flex h-[57px] items-center rounded-[6px] bg-[#262626] px-[6px] text-[29px]">
              <span className="flex h-[45px] w-[137px] items-center justify-center rounded-[6px] bg-[#4a4a4a] text-[#dcdcdc]">90%成本</span>
              <span className="flex-1 text-center text-[#5a5a5a]">70%成本</span>
            </div>
            <div className="mt-[4px] flex h-[38px] items-center justify-between">
              <span className="text-[29px] text-[#666]">价格区间:</span>
              <span className="text-[23px] text-[#dcdcdc]">4.43 ~ 6.68</span>
            </div>
            <div className="flex h-[38px] items-center justify-between">
              <span className="text-[29px] text-[#666]">集中度:</span>
              <span className="text-[29px] text-[#dcdcdc]">20.2%</span>
            </div>
            <div className="mt-auto flex h-[57px] w-[105px] items-center justify-center self-end rounded-[8px] bg-[#2a2a2a] text-[33px] text-[#dcdcdc]">关闭</div>
          </div>
        </div>
      </div>

      {/* mode strip */}
      <div className="mt-[11px] flex h-[79px] shrink-0 items-center gap-[14px] overflow-hidden border-y-2 border-[#2a2a2a] pb-[1px] pl-[14px]">
        <Chip text="普通模式" v={false} className="w-[177px]" />
        <Chip text="进阶版" className="w-[177px]" />
        <Chip text="多空趋势线" active className="w-[183px]" />
        <Chip text="龙头体验" className="w-[177px]" />
        <Chip text="基础版" className="w-[177px]" />
        <Chip text="龙头基础" className="w-[177px]" />
        <Chip text="超盈资金" className="w-[177px]" />
      </div>

      {/* chat */}
      <div className="mt-[14px] flex h-[74px] shrink-0 gap-[29px] px-[14px] text-[32px]">
        <div className="flex w-[430px] items-center justify-center gap-[10px] rounded-[37px] border-2 border-[#242424] bg-[#141414] text-[#bcbcbc]">
          <svg width="56" height="46" viewBox="0 0 56 46" fill="#c4c4c4">
            <path d="M16 1 C7 1 1 7 1 15 C1 20 3 24 7 27 L6 34 L13 29 C15 30 17 30 19 30 C17 20 24 12 36 12 C33 5 25 1 16 1Z" />
            <path d="M37 15 C27 15 21 21 21 28 C21 35 27 40 37 40 L46 45 L45 37 C51 35 55 32 55 27 C55 20 47 15 37 15Z" />
            <circle cx="30" cy="28" r="2.2" fill="#141414" />
            <circle cx="38" cy="28" r="2.2" fill="#141414" />
            <circle cx="46" cy="28" r="2.2" fill="#141414" />
          </svg>
          进入聊天室
        </div>
        <div className="flex flex-1 items-center justify-center rounded-[37px] border-2 border-[#242424] bg-[#141414] text-[#a8a8a8]">股友们都在聊什么...</div>
      </div>

      {/* bottom nav */}
      <div className="flex flex-1">
        <div className="relative w-[220px] pl-[18px] pt-[27px]">
          <svg width="22" height="12" viewBox="0 0 22 12" className="ml-[78px]">
            <polygon points="11,0 22,12 0,12" fill="#d8d8d8" />
          </svg>
          <div className="ml-[28px] mt-[23px] text-[33px] leading-[40px] text-[#2DA82D]">4208.91</div>
          <div className="mt-[8px] flex items-center gap-[12px]">
            <span className="text-[14px] leading-[30px] text-[#b0b0b0]">种植业与林业</span>
            <span className="text-[28px] leading-[30px] text-[#2DA82D]">-3.88%</span>
          </div>
        </div>
        <NavItem
          label="诊股"
          className="w-[188px]"
          icon={
            <svg width="52" height="50" viewBox="0 0 52 50" fill="none" stroke="#c6c6c6" strokeWidth="2.4">
              <path d="M2 2 H50 V40 H32 L25 48 L20 40 H2 Z" />
              <polyline points="15,28 20,20 25,27 35,14" strokeWidth="2" />
              <polyline points="30,14 35,14 35,19" strokeWidth="2" />
            </svg>
          }
        />
        <NavItem
          label="避雷"
          className="w-[218px]"
          icon={
            <svg width="54" height="50" viewBox="0 0 54 50" fill="none" stroke="#c6c6c6" strokeWidth="2.4">
              <circle cx="22" cy="29" r="19" />
              <path d="M11 27 A12 12 0 0 1 20 17" />
              <path d="M32 12 L38 7 L43 13 L38 18" />
              <path d="M41 7 C43 4 47 3 50 2" />
            </svg>
          }
        />
        <NavItem
          label="加自选"
          className="w-[216px]"
          icon={
            <svg width="48" height="44" viewBox="0 0 48 44" fill="none" stroke="#E01515" strokeWidth="2.6">
              <rect x="1.5" y="1.5" width="45" height="41" />
              <line x1="24" y1="11" x2="24" y2="33" />
              <line x1="13" y1="22" x2="35" y2="22" />
            </svg>
          }
        />
        <NavItem
          label="加板块"
          className="w-[240px]"
          icon={
            <svg width="48" height="44" viewBox="0 0 48 44" fill="none" stroke="#c6c6c6" strokeWidth="2.4">
              <rect x="1.5" y="1.5" width="45" height="41" />
              <line x1="24" y1="11" x2="24" y2="33" />
              <line x1="13" y1="22" x2="35" y2="22" />
            </svg>
          }
        />
        <NavItem
          label="功能"
          className="w-[190px]"
          icon={
            <svg width="48" height="48" viewBox="0 0 48 48" fill="none" stroke="#c6c6c6" strokeWidth="2.4">
              <circle cx="24" cy="24" r="22" />
              <line x1="15" y1="15" x2="33" y2="15" />
              <line x1="15" y1="24" x2="33" y2="24" />
              <line x1="15" y1="33" x2="33" y2="33" />
            </svg>
          }
        />
      </div>
    </div>
  );
}
